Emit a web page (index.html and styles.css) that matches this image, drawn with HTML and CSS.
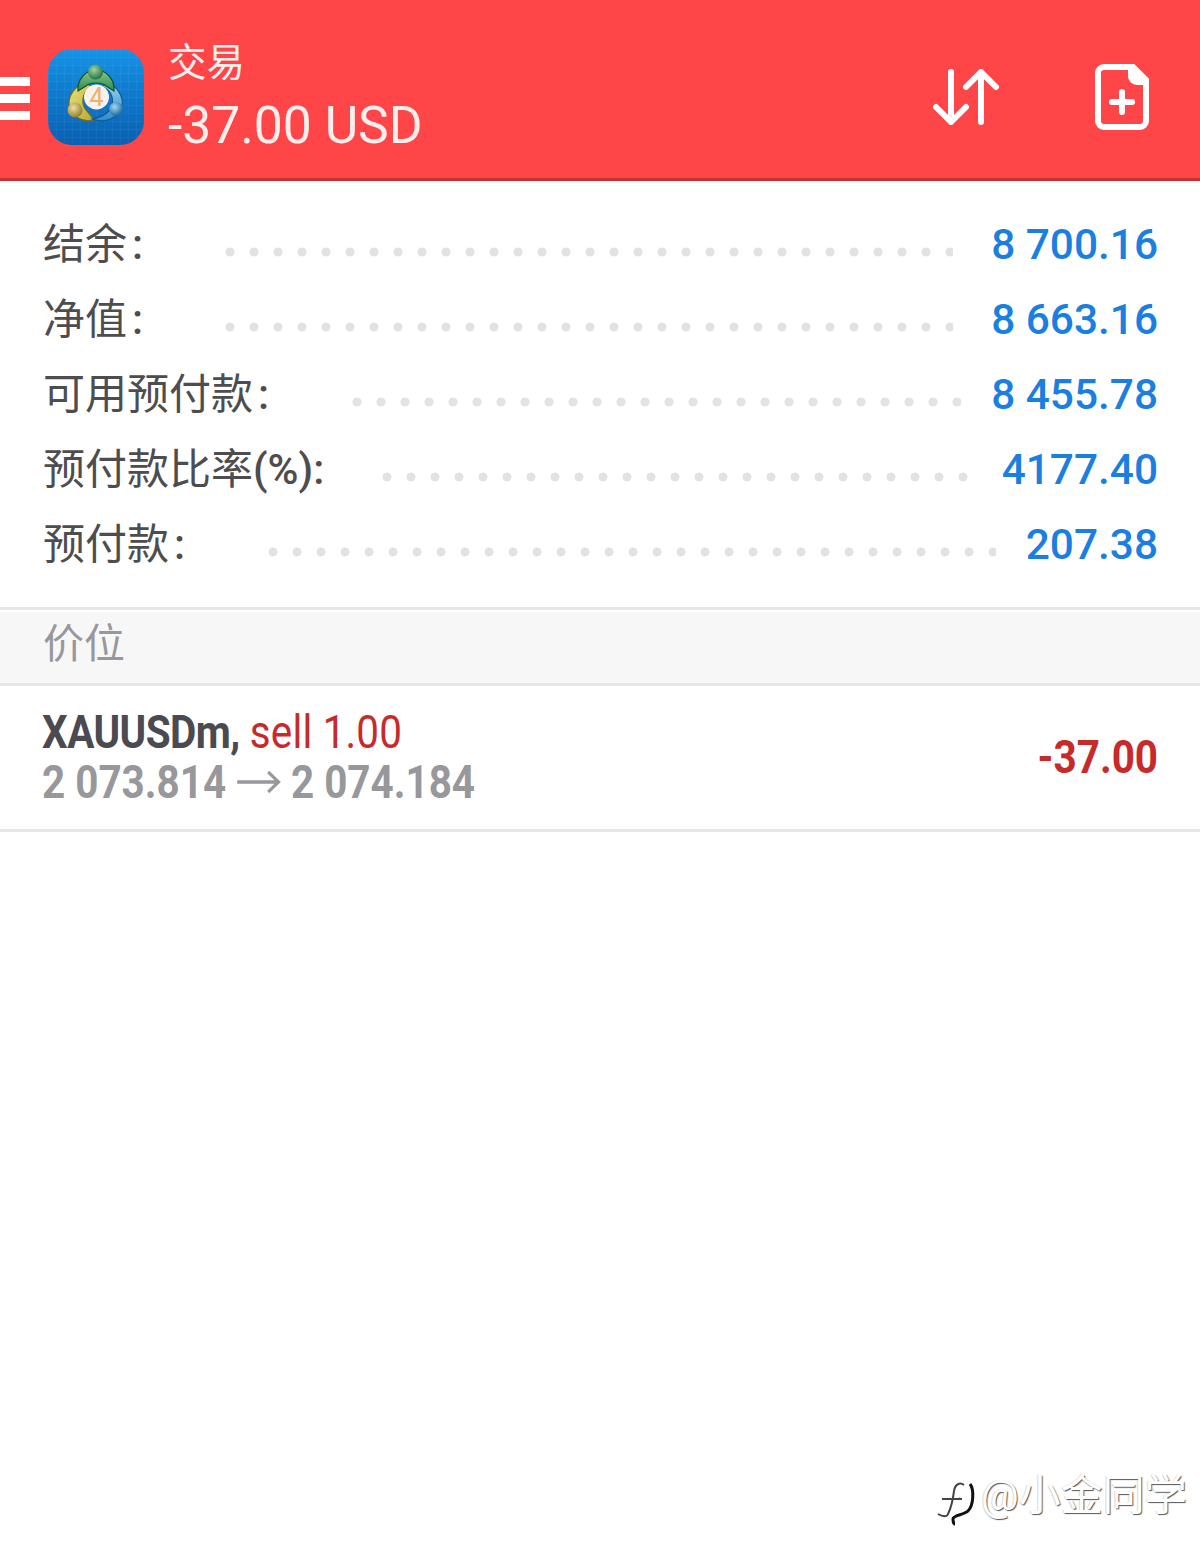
FILE: index.html
```html
<!DOCTYPE html>
<html>
	<head>
		<meta charset="utf-8">
		<title>交易</title>
		<link rel="stylesheet" href="styles.css">
	</head>
	<body>
		<div id="page">
			<header class="topbar">
				<div class="burger"><span></span><span></span><span></span></div>
				<svg class="app-logo" viewBox="0 0 96 96">
					<defs>
						<linearGradient id="logoBg" x1="0" y1="0" x2="0" y2="1">
							<stop offset="0" stop-color="#1593e6"/>
							<stop offset="1" stop-color="#0a5fb0"/>
						</linearGradient>
						<pattern id="logoGrid" width="8" height="8" patternUnits="userSpaceOnUse">
							<path d="M8 0H0V8" fill="none" stroke="#fff" stroke-opacity="0.08" stroke-width="1"/>
						</pattern>
						<linearGradient id="logoGreen" x1="0" y1="0" x2="0" y2="1">
							<stop offset="0" stop-color="#8cc98a"/>
							<stop offset="1" stop-color="#2a8a50"/>
						</linearGradient>
						<linearGradient id="logoYellow" x1="0" y1="0" x2="1" y2="1">
							<stop offset="0" stop-color="#ece27a"/>
							<stop offset="1" stop-color="#b8a832"/>
						</linearGradient>
						<linearGradient id="logoBlue" x1="0" y1="0" x2="0" y2="1">
							<stop offset="0" stop-color="#9ad4f0"/>
							<stop offset="1" stop-color="#2b8ccb"/>
						</linearGradient>
						<radialGradient id="headGreen" cx="0.4" cy="0.35" r="0.7">
							<stop offset="0" stop-color="#a5d4a0"/>
							<stop offset="1" stop-color="#1c6d3e"/>
						</radialGradient>
						<radialGradient id="headYellow" cx="0.4" cy="0.35" r="0.7">
							<stop offset="0" stop-color="#efe0a0"/>
							<stop offset="1" stop-color="#8a7a25"/>
						</radialGradient>
						<radialGradient id="headBlue" cx="0.4" cy="0.35" r="0.7">
							<stop offset="0" stop-color="#a5d8f2"/>
							<stop offset="1" stop-color="#14609c"/>
						</radialGradient>
					</defs>
					<rect width="96" height="96" rx="24" fill="url(#logoBg)"/>
					<rect width="96" height="96" rx="24" fill="url(#logoGrid)"/>
					<path d="M38 33C28 36 20 46 21 56 23 67 34 74 46 71L39 62C33 56 33 44 43 38Z" fill="url(#logoYellow)" stroke="#6e6a1c" stroke-width="1.2"/>
					<path d="M59 33C70 38 76 48 74 58 70 69 58 75 44 70 54 68 62 64 64 56 66 48 62 41 55 38Z" fill="url(#logoBlue)" stroke="#125a92" stroke-width="1.2"/>
					<path d="M30 42C29 30 38 21 48 21S67 30 66 42L58 37C54 33 42 33 38 37Z" fill="url(#logoGreen)" stroke="#124f2d" stroke-width="1.2"/>
					<circle cx="47.500" cy="23" r="7.500" fill="url(#headGreen)"/>
					<circle cx="27" cy="61" r="7.500" fill="url(#headYellow)"/>
					<circle cx="68" cy="60" r="7" fill="url(#headBlue)"/>
					<circle cx="48.500" cy="48" r="12.500" fill="#f7f3ea"/>
					<text x="48.500" y="57" class="logo-four">4</text>
				</svg>
				<div class="title-block">
					<div class="title-top">交易</div>
					<div class="title-sum">-37.00 USD</div>
				</div>
				<svg class="icon-sort" viewBox="0 0 68 56">
					<path d="M18 3v50M3 38l15 15 15-15M48 53V3M33 18L48 3l15 15"/>
				</svg>
				<svg class="icon-newfile" viewBox="0 0 54 66">
					<path class="file-body" d="M9 3h29l13 13v41a6 6 0 0 1-6 6H9a6 6 0 0 1-6-6V9a6 6 0 0 1 6-6z"/>
					<path class="file-ear" d="M33 3h5l13 13v5H42a9 9 0 0 1-9-9z"/>
					<path class="file-plus" d="M27 28v20M17 38h20"/>
				</svg>
			</header>

			<section class="summary">
				<div class="sum-row">
					<span class="sum-label">结余<i class="colon">:</i></span>
					<span class="leader"></span>
					<span class="sum-val">8 700.16</span>
				</div>
				<div class="sum-row">
					<span class="sum-label">净值<i class="colon">:</i></span>
					<span class="leader"></span>
					<span class="sum-val">8 663.16</span>
				</div>
				<div class="sum-row">
					<span class="sum-label">可用预付款<i class="colon">:</i></span>
					<span class="leader leader-wide"></span>
					<span class="sum-val">8 455.78</span>
				</div>
				<div class="sum-row">
					<span class="sum-label">预付款比率<b class="pct">(%):</b></span>
					<span class="leader leader-short"></span>
					<span class="sum-val">4177.40</span>
				</div>
				<div class="sum-row">
					<span class="sum-label">预付款<i class="colon">:</i></span>
					<span class="leader leader-wide"></span>
					<span class="sum-val">207.38</span>
				</div>
			</section>

			<div class="section-head">价位</div>

			<div class="position">
				<div class="pos-left">
					<div class="pos-line1"><b class="pos-symbol">XAUUSDm,</b> <span class="pos-red">sell 1.00</span></div>
					<div class="pos-line2">2 073.814 <svg class="pos-arrow" viewBox="0 0 52 24"><path d="M1 12h48M37 2l12 10-12 10"/></svg> 2 074.184</div>
				</div>
				<div class="pos-profit">-37.00</div>
			</div>

			<div class="watermark">
				<svg class="wm-logo" viewBox="0 0 40 54">
					<path d="M26 12c-4-3-9-1-10 6-1 8-3 17-6 23-1 3-5 3-10 0M4 26h20M21 25l1 1"/>
					<path class="wm-dark" d="M32 11c4 5 4 21-2 27-4 4-15 4-15 8 0 3 1 5 2 5"/>
				</svg>
				<span>@小金同学</span>
			</div>
		</div>
	</body>
</html>
```
FILE: styles.css
```css
html, body {
	margin: 0;
	padding: 0;
	background: #fff;
}

#page {
	position: relative;
	width: 1200px;
	height: 1563px;
	overflow: hidden;
	font-family: Roboto, "Noto Sans CJK SC", sans-serif;
}

/*** top bar **/

.topbar {
	display: flex;
	align-items: flex-start;
	box-sizing: border-box;
	height: 181px;
	background: #fe4548;
	border-bottom: 3px solid #c53236;
}

.burger {
	display: flex;
	flex-direction: column;
	gap: 8px;
	width: 30px;
	margin-top: 77px;
}

.burger span {
	display: block;
	height: 9px;
	background: #fff;
}

.app-logo {
	width: 96px;
	height: 96px;
	margin: 49px 0 0 18px;
}

.logo-four {
	font-family: Roboto, sans-serif;
	font-size: 25px;
	font-weight: 400;
	fill: #efb070;
	text-anchor: middle;
}

.title-block {
	flex: 1;
	margin: 39px 0 0 24px;
	color: #fdeeee;
}

.title-top {
	font-size: 38.5px;
	line-height: 48px;
}

.title-sum {
	margin-top: 10px;
	font-size: 51.6px;
	line-height: 58px;
}

.icon-sort {
	width: 68px;
	height: 56px;
	margin: 69px 94px 0 0;
}

.icon-sort path {
	fill: none;
	stroke: #fff;
	stroke-width: 6;
	stroke-linecap: round;
	stroke-linejoin: round;
}

.icon-newfile {
	width: 54px;
	height: 66px;
	margin: 64px 51px 0 0;
}

.file-body {
	fill: none;
	stroke: #fff;
	stroke-width: 6;
}

.file-ear {
	fill: #fff;
}

.file-plus {
	fill: none;
	stroke: #fff;
	stroke-width: 6;
	stroke-linecap: round;
}

/*** account summary **/

.summary {
	padding: 26px 42px 25px 43px;
	border-bottom: 3px solid #e6e6e6;
}

.sum-row {
	display: flex;
	align-items: center;
	height: 75px;
}

.sum-label {
	font-size: 42px;
	line-height: 75px;
	color: #4d4d4f;
	white-space: nowrap;
}

.colon {
	margin-left: 5px;
	font-style: normal;
	font-weight: 500;
}

.pct {
	font-weight: 500;
}

.leader {
	flex: 1;
	height: 10px;
	margin: 14px 38px 0 82px;
	background-image: radial-gradient(circle at 5px 5px, #e2e2e2 4.2px, transparent 4.8px);
	background-size: 24px 10px;
	background-repeat: repeat-x;
}

.leader-wide {
	margin-right: 30px;
	margin-left: 83px;
}

.leader-short {
	margin-right: 34px;
	margin-left: 58px;
}

.sum-val {
	font-size: 42.4px;
	font-weight: 500;
	color: #1a7fe0;
	white-space: nowrap;
}

/*** positions **/

.section-head {
	box-sizing: border-box;
	height: 74px;
	margin-top: 2px;
	padding-left: 43px;
	background: #f7f7f7;
	border-bottom: 3px solid #e6e6e6;
	font-size: 41px;
	line-height: 64px;
	color: #98989c;
}

.position {
	display: flex;
	align-items: center;
	box-sizing: border-box;
	height: 146px;
	padding: 0 42px 2px;
	border-bottom: 3px solid #e6e6e6;
}

.pos-left {
	flex: 1;
	transform: scaleX(0.86);
	transform-origin: left center;
	white-space: nowrap;
}

.pos-line1 {
	font-size: 47px;
	line-height: 50px;
	color: #4a4a50;
}

.pos-symbol {
	letter-spacing: -0.6px;
}

.pos-red {
	letter-spacing: 0.2px;
	color: #c62a2a;
}

.pos-line2 {
	font-size: 47px;
	line-height: 50px;
	font-weight: 700;
	color: #97979c;
}

.pos-arrow {
	width: 52px;
	height: 24px;
	vertical-align: 4px;
}

.pos-arrow path {
	fill: none;
	stroke: #97979c;
	stroke-width: 3.5;
}

.pos-profit {
	font-size: 47px;
	font-weight: 700;
	color: #c62a2a;
	transform: scaleX(0.86);
	transform-origin: right center;
}

/*** watermark **/

.watermark {
	position: absolute;
	left: 938px;
	top: 1465px;
	display: flex;
	align-items: center;
	gap: 3px;
	font-size: 42px;
	line-height: 56px;
	color: #fff;
	text-shadow: 1px 1px 1px #555, -1px 0 0 #ddd;
}

.wm-logo {
	width: 40px;
	height: 54px;
	margin-top: 8px;
	overflow: visible;
}

.wm-logo path {
	fill: none;
	stroke: #444;
	stroke-width: 2;
}

.wm-logo .wm-dark {
	stroke: #111;
	stroke-width: 3;
}
```
